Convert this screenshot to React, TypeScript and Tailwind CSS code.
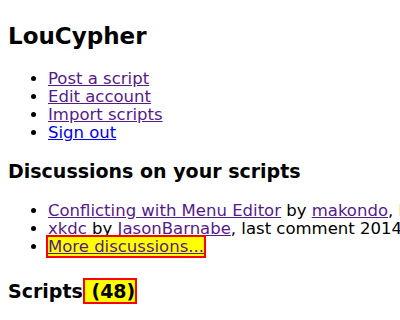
export default function App() {
  const visited = "text-[#551a8b] underline";
  return (
    <div className="h-[320px] w-[400px] overflow-hidden bg-white px-2 font-['DejaVu_Sans',Verdana,sans-serif] text-[16.5px] leading-[18px] text-black">
      <h1 className="pt-[22px] text-[23px] font-bold leading-[28px]">LouCypher</h1>
      <ul className="mt-[20px] list-disc pl-10">
        <li><a href="#" className={visited}>Post a script</a></li>
        <li><a href="#" className={visited}>Edit account</a></li>
        <li><a href="#" className={visited}>Import scripts</a></li>
        <li><a href="#" className="text-[#0000ee] underline">Sign out</a></li>
      </ul>
      <h2 className="mt-[18px] text-[19px] font-bold leading-[22px]">Discussions on your scripts</h2>
      <ul className="mt-[20px] list-disc whitespace-nowrap pl-10">
        <li>
          <a href="#" className={visited}>Conflicting with Menu Editor</a> by{" "}
          <a href="#" className={visited}>makondo</a>, last comment 2014-03-02
        </li>
        <li>
          <a href="#" className={visited}>xkdc</a> by{" "}
          <a href="#" className={visited}>JasonBarnabe</a>, last comment 2014-02-27
        </li>
        <li>
          <a href="#" className={`${visited} -ml-[2px] border-2 border-[#ff0000] bg-[#ffff00]`}>More discussions...</a>
        </li>
      </ul>
      <h2 className="mt-[24px] text-[19px] font-bold leading-[22px]">
        Scripts<span className="border-2 border-[#ff0000] bg-[#ffff00]"> (48)</span>
      </h2>
    </div>
  );
}
